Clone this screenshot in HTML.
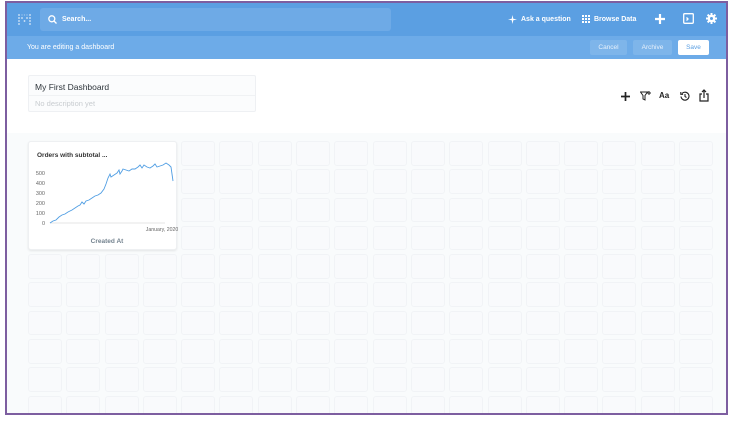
<!DOCTYPE html>
<html><head><style>
*{margin:0;padding:0;box-sizing:border-box}
body{width:729px;height:421px;background:#fff;font-family:"Liberation Sans",sans-serif;position:relative;overflow:hidden}
.frame{position:absolute;left:5px;top:1px;width:723px;height:414px;border:2px solid #7d5ea0;overflow:hidden;background:#f9fbfc}
.nav{position:absolute;left:0;top:0;width:100%;height:33px;background:#5b9fe2}
.edit{position:absolute;left:0;top:33px;width:100%;height:23px;background:#6dabe8;color:#fff;font-size:7px}
.head{position:absolute;left:0;top:56px;width:100%;height:74px;background:#fff}
.search{position:absolute;left:33px;top:5px;width:351px;height:23px;background:#6eaae6;border-radius:3px;color:#fff;font-size:7px;font-weight:bold;line-height:23px;padding-left:22px}
.nt{position:absolute;color:#fff;font-size:7px;font-weight:bold;top:13px}
.btn{position:absolute;top:4px;height:15px;border-radius:2px;font-size:6.5px;line-height:15px;text-align:center;background:#7eb5ea;color:#e8f1fb}
.grid{position:absolute;left:21px;top:138px;display:grid;grid-template-columns:repeat(18,34px);grid-auto-rows:24.5px;column-gap:4.3px;row-gap:3.8px}
.grid div{border:1px solid #f1f3f6;border-radius:3px;background:#f9fafc}
.card{position:absolute;left:21px;top:138px;width:149px;height:109px;background:#fff;border-radius:3px;box-shadow:0 1px 2px rgba(0,0,0,.09);border:1px solid #eef0f2}
</style></head><body>
<div class="frame">
<div class="nav">
<svg style="position:absolute;left:11px;top:11px" width="13" height="11" viewBox="0 0 13 11" fill="#dbe9f8"><g>
<circle cx="1" cy="1" r=".9"/><circle cx="1" cy="4" r=".9"/><circle cx="1" cy="7" r=".9"/><circle cx="1" cy="10" r=".9"/>
<circle cx="4" cy="4" r=".9"/><circle cx="6.5" cy="7" r=".9"/><circle cx="9" cy="4" r=".9"/><circle cx="4" cy="1" r=".7" opacity=".5"/><circle cx="6.5" cy="1" r=".7" opacity=".5"/><circle cx="9" cy="1" r=".7" opacity=".5"/>
<circle cx="12" cy="1" r=".9"/><circle cx="12" cy="4" r=".9"/><circle cx="12" cy="7" r=".9"/><circle cx="12" cy="10" r=".9"/></g></svg>
<div class="search"><svg style="position:absolute;left:8px;top:7px" width="9" height="9" viewBox="0 0 9 9" fill="none" stroke="#fff" stroke-width="1.3"><circle cx="3.8" cy="3.8" r="3"/><path d="M6 6l2.5 2.5"/></svg>Search...</div>
<svg style="position:absolute;left:501px;top:12px" width="9" height="9" viewBox="0 0 9 9"><path d="M4.5 0L5.3 3.7 9 4.5 5.3 5.3 4.5 9 3.7 5.3 0 4.5 3.7 3.7Z" fill="#fff"/></svg>
<div class="nt" style="left:514px">Ask a question</div>
<svg style="position:absolute;left:575px;top:12px" width="8" height="8" viewBox="0 0 8 8" fill="#fff"><rect x="0" y="0" width="2" height="2"/><rect x="3" y="0" width="2" height="2"/><rect x="6" y="0" width="2" height="2"/><rect x="0" y="3" width="2" height="2"/><rect x="3" y="3" width="2" height="2"/><rect x="6" y="3" width="2" height="2"/><rect x="0" y="6" width="2" height="2"/><rect x="3" y="6" width="2" height="2"/><rect x="6" y="6" width="2" height="2"/></svg>
<div class="nt" style="left:587px">Browse Data</div>
<svg style="position:absolute;left:648px;top:11px" width="10" height="10" viewBox="0 0 10 10"><path d="M5 0v10M0 5h10" stroke="#fff" stroke-width="2.2"/></svg>
<svg style="position:absolute;left:676px;top:10px" width="11" height="11" viewBox="0 0 11 11" fill="none" stroke="#fff" stroke-width="1.3"><rect x=".7" y=".7" width="9.6" height="9.6" rx="1"/><path d="M3.5 4.5l1.5 1.5-1.5 1.5"/></svg>
<svg style="position:absolute;left:699px;top:10px" width="11" height="11" viewBox="0 0 11 11"><g fill="#fff"><circle cx="5.5" cy="5.5" r="3.8"/><rect x="4.5" y="0" width="2" height="11"/><rect x="0" y="4.5" width="11" height="2"/><rect x="4.5" y="0" width="2" height="11" transform="rotate(45 5.5 5.5)"/><rect x="4.5" y="0" width="2" height="11" transform="rotate(-45 5.5 5.5)"/></g><circle cx="5.5" cy="5.5" r="1.5" fill="#5b9fe2"/></svg>
</div>
<div class="edit"><span style="position:absolute;left:20px;top:8px">You are editing a dashboard</span>
<div class="btn" style="left:583px;width:37px">Cancel</div>
<div class="btn" style="left:626px;width:39px">Archive</div>
<div class="btn" style="left:671px;width:31px;background:#fff;color:#5b9fe2">Save</div>
</div>
<div class="head">
<div style="position:absolute;left:21px;top:16px;width:228px;height:37px;border:1px solid #eef0f3;border-radius:2px;background:#fbfcfd">
<div style="position:absolute;left:6px;top:6px;font-size:8.5px;color:#2e353b">My First Dashboard</div>
<div style="position:absolute;left:0;top:19px;width:100%;border-top:1px solid #f0f2f4"></div>
<div style="position:absolute;left:6px;top:23px;font-size:7.5px;color:#c8ccd0">No description yet</div>
</div>
<svg style="position:absolute;left:614px;top:33px" width="9" height="9" viewBox="0 0 9 9"><path d="M4.5 0v9M0 4.5h9" stroke="#222" stroke-width="1.7"/></svg>
<svg style="position:absolute;left:633px;top:32px" width="11" height="10" viewBox="0 0 11 10" fill="none" stroke="#222" stroke-width="1"><path d="M.5 1h7L5 4.5V9L3 8V4.5Z"/><path d="M9 0v4M7 2h4"/></svg>
<div style="position:absolute;left:652px;top:32px;font-size:8px;font-weight:bold;color:#222">Aa</div>
<svg style="position:absolute;left:673px;top:32px" width="10" height="10" viewBox="0 0 10 10" fill="none" stroke="#222" stroke-width="1.1"><path d="M2 2.5A4 4 0 1 1 1 5.5"/><path d="M.8 1v2.3h2.3"/><path d="M5 3v2.5l1.5 1"/></svg>
<svg style="position:absolute;left:692px;top:30px" width="10" height="13" viewBox="0 0 10 13" fill="none" stroke="#222" stroke-width="1.2"><path d="M3 5H1v7h8V5H7"/><path d="M5 9V1M3 3l2-2 2 2"/></svg>
</div>
<div class="grid">
<div></div><div></div><div></div><div></div><div></div><div></div><div></div><div></div><div></div><div></div><div></div><div></div><div></div><div></div><div></div><div></div><div></div><div></div>
<div></div><div></div><div></div><div></div><div></div><div></div><div></div><div></div><div></div><div></div><div></div><div></div><div></div><div></div><div></div><div></div><div></div><div></div>
<div></div><div></div><div></div><div></div><div></div><div></div><div></div><div></div><div></div><div></div><div></div><div></div><div></div><div></div><div></div><div></div><div></div><div></div>
<div></div><div></div><div></div><div></div><div></div><div></div><div></div><div></div><div></div><div></div><div></div><div></div><div></div><div></div><div></div><div></div><div></div><div></div>
<div></div><div></div><div></div><div></div><div></div><div></div><div></div><div></div><div></div><div></div><div></div><div></div><div></div><div></div><div></div><div></div><div></div><div></div>
<div></div><div></div><div></div><div></div><div></div><div></div><div></div><div></div><div></div><div></div><div></div><div></div><div></div><div></div><div></div><div></div><div></div><div></div>
<div></div><div></div><div></div><div></div><div></div><div></div><div></div><div></div><div></div><div></div><div></div><div></div><div></div><div></div><div></div><div></div><div></div><div></div>
<div></div><div></div><div></div><div></div><div></div><div></div><div></div><div></div><div></div><div></div><div></div><div></div><div></div><div></div><div></div><div></div><div></div><div></div>
<div></div><div></div><div></div><div></div><div></div><div></div><div></div><div></div><div></div><div></div><div></div><div></div><div></div><div></div><div></div><div></div><div></div><div></div>
<div></div><div></div><div></div><div></div><div></div><div></div><div></div><div></div><div></div><div></div><div></div><div></div><div></div><div></div><div></div><div></div><div></div><div></div>
</div>
<div class="card">
<div style="position:absolute;left:8px;top:10px;font-size:6.5px;font-weight:bold;color:#333">Orders with subtotal ...</div>
<svg style="position:absolute;left:0;top:0" width="149" height="109" viewBox="0 0 149 109" font-family="Liberation Sans" font-size="5.5" fill="#666">
<text x="16" y="33" text-anchor="end">500</text><text x="16" y="43" text-anchor="end">400</text><text x="16" y="53" text-anchor="end">300</text><text x="16" y="63" text-anchor="end">200</text><text x="16" y="73" text-anchor="end">100</text><text x="16" y="83" text-anchor="end">0</text>
<path d="M21 81H136" stroke="#ddd" stroke-width=".7"/>
<path d="M21 81l3-2 3-1 3-3 3-2 3-1 3-2 4-2 3-2 3-2 2-1 2-3 2 2 2-3 3-1 3-2 3-2 3-1 3-2 3-4 2-5 2-6 2-4 1 3 3-2 3-2 2-3 1 4 2-3 1-2 3 1 3 1 3-2 3 0 3-2 2-2 2 3 2-3 3 2 3 1 3-2 2-2 2 3 3-1 3-1 3-2 3 2 2 2 1 7 1 7" fill="none" stroke="#509ee3" stroke-width=".9"/>
<text x="133" y="89" text-anchor="middle" font-size="5.2">January, 2020</text>
<text x="78" y="101" text-anchor="middle" font-size="6.5" fill="#74838f" font-weight="bold">Created At</text>
</svg>
</div>
</div>
</body></html>
